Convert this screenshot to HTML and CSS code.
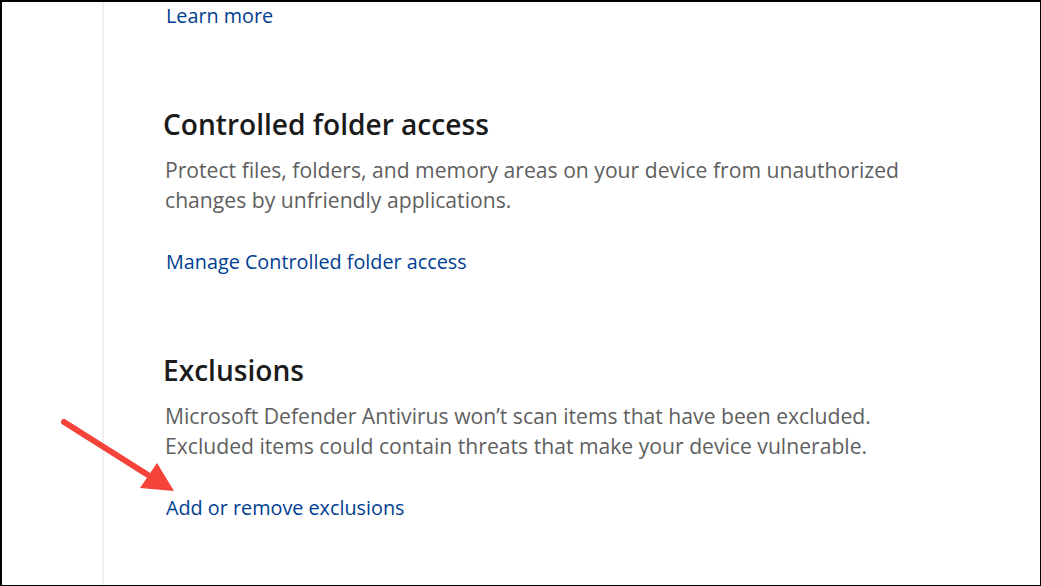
FILE: index.html
```html
<!DOCTYPE html>
<html>
<head>
<meta charset="utf-8">
<link rel="stylesheet" href="styles.css">
</head>
<body>
<div class="frame">
  <div class="rail"></div>
  <main class="content">
    <a class="link first" href="#">Learn more</a>
    <section class="section">
      <h2 class="title">Controlled folder access</h2>
      <p class="desc">Protect files, folders, and memory areas on your device from unauthorized<br>changes by unfriendly applications.</p>
      <a class="link" href="#">Manage Controlled folder access</a>
    </section>
    <section class="section">
      <h2 class="title">Exclusions</h2>
      <p class="desc">Microsoft Defender Antivirus won’t scan items that have been excluded.<br>Excluded items could contain threats that make your device vulnerable.</p>
      <a class="link" href="#">Add or remove exclusions</a>
    </section>
  </main>
  <svg class="arrow" width="200" height="120" viewBox="0 0 200 120">
    <line x1="8" y1="22" x2="92" y2="75" stroke="#f5433a" stroke-width="6" stroke-linecap="round"/>
    <polygon points="118,91 84,88 101,63" fill="#f5433a"/>
  </svg>
</div>
</body>
</html>
```
FILE: styles.css
```css
html, body {
  margin: 0;
  padding: 0;
  background: #fff;
}
.frame {
  position: relative;
  width: 1041px;
  height: 586px;
  box-sizing: border-box;
  border-top: 2px solid #000;
  border-left: 2px solid #000;
  border-right: 1px solid #000;
  border-bottom: 1px solid #000;
  display: flex;
  overflow: hidden;
  font-family: "Open Sans", "Noto Sans", sans-serif;
}
.rail {
  width: 100px;
  flex: none;
  border-right: 2px solid #efefef;
}
.content {
  padding-left: 59px;
  display: flex;
  flex-direction: column;
  align-items: flex-start;
}
.link {
  display: block;
  color: #003e92;
  text-decoration: none;
  font-size: 19.8px;
  line-height: 28px;
  margin-left: 3px;
}
.section {
  margin-top: 76px;
  display: flex;
  flex-direction: column;
  align-items: flex-start;
}
.title {
  margin: 0;
  font-size: 28.1px;
  line-height: 36px;
  font-weight: 600;
  color: #1b1b1b;
}
.desc {
  margin: 13px 0 33px 2px;
  font-size: 21.15px;
  line-height: 30px;
  color: #5f5f5f;
}
.arrow {
  position: absolute;
  left: 54px;
  top: 398px;
}
```
